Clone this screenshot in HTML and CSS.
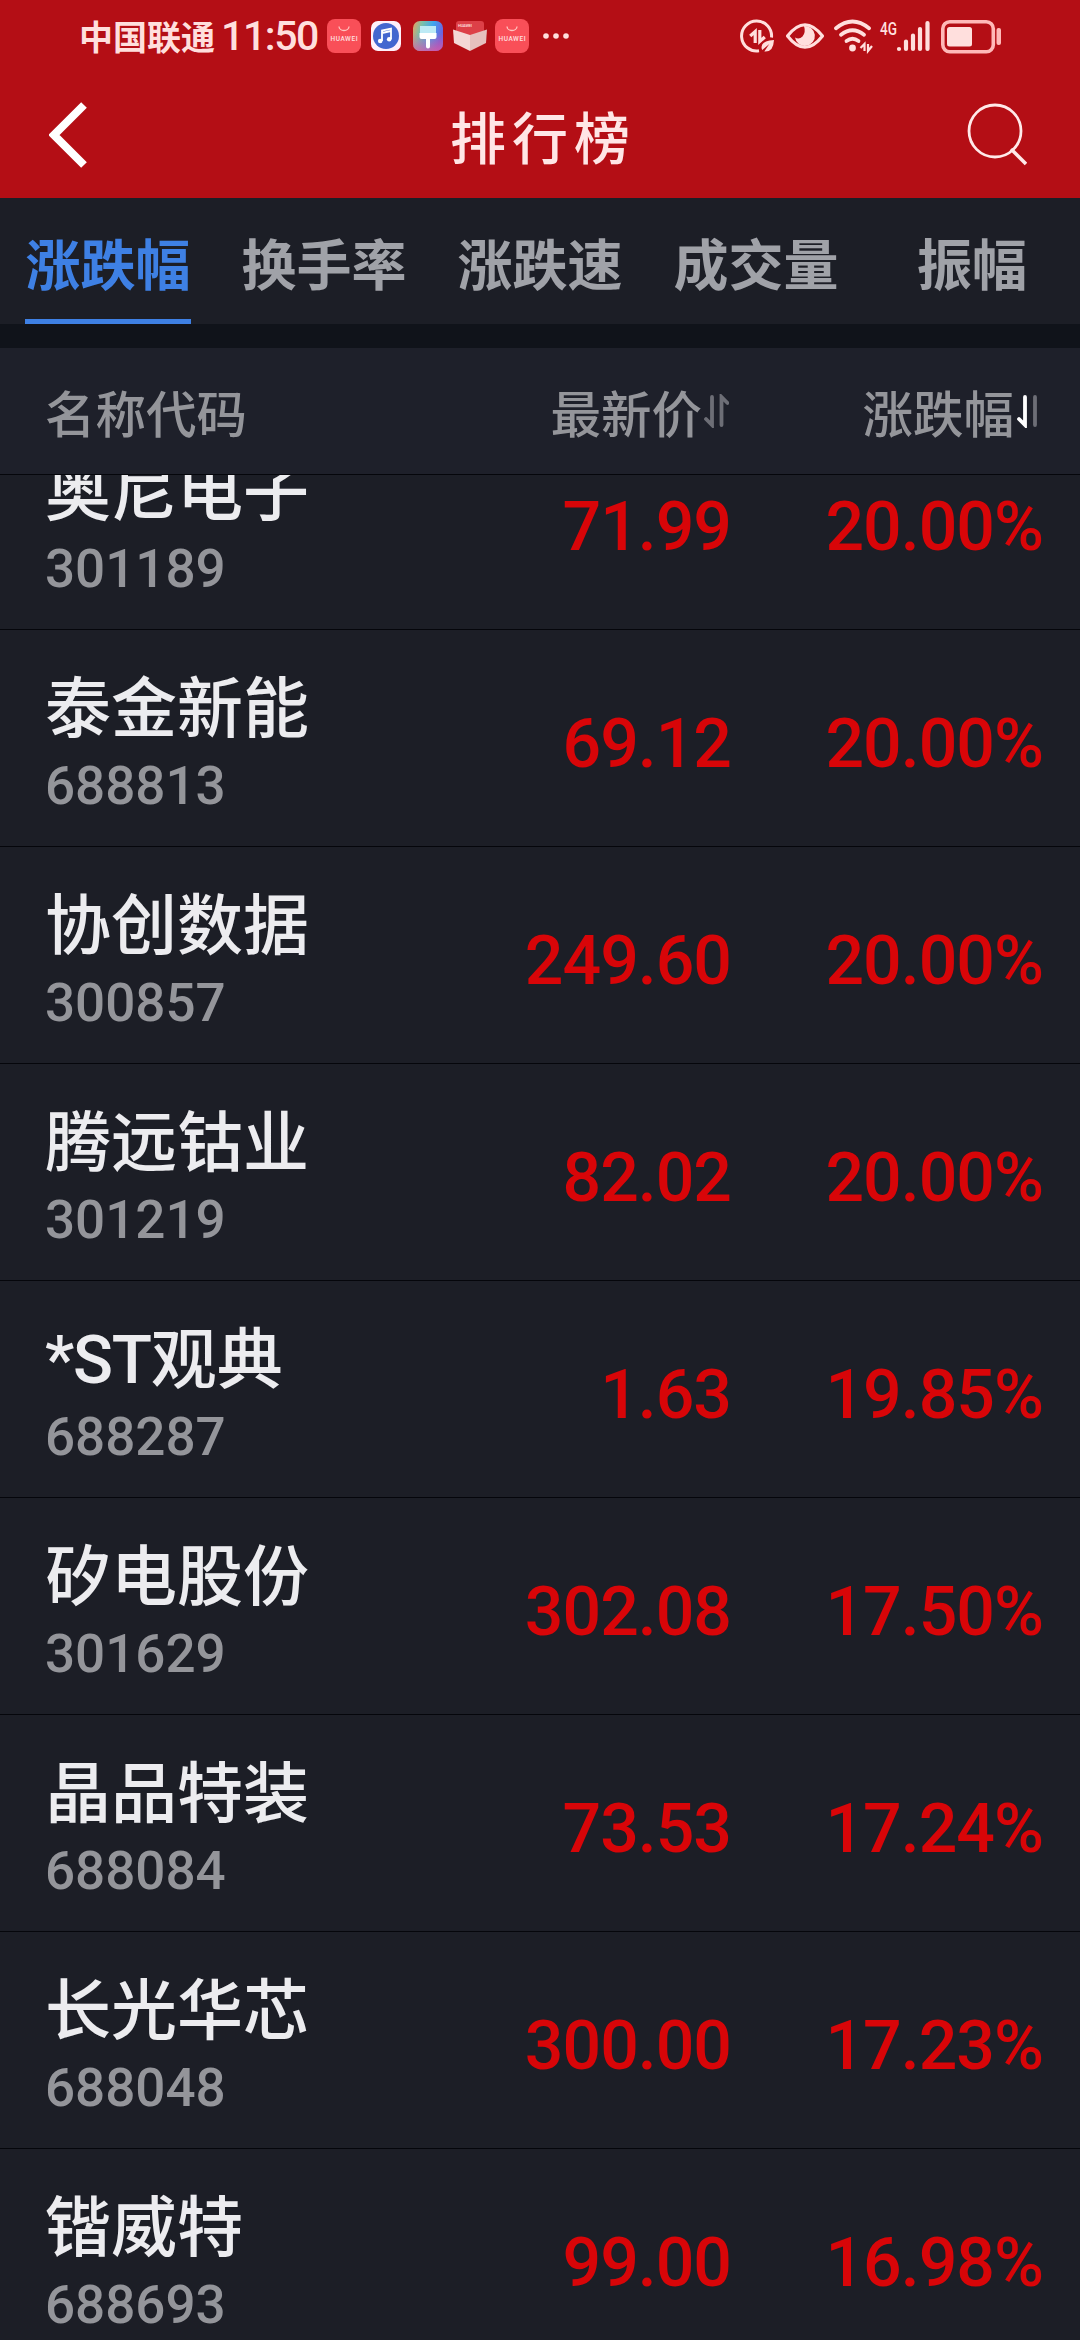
FILE: index.html
```html
<!DOCTYPE html>
<html lang="zh-CN">
<head>
  <meta charset="UTF-8">
  <meta name="viewport" content="width=device-width, initial-scale=1.0">
  <title>排行榜</title>
  <link rel="stylesheet" href="styles.css">
</head>
<body>
  <header class="top">
    <div class="status-bar">
      <span class="carrier">中国联通</span>
      <span class="clock">11:50</span>
      <div class="apps">
        <svg class="app-lg" viewBox="0 0 34 34">
          <rect width="34" height="34" rx="8" fill="#f94f58"/>
          <path d="M12 7.500a5 4 0 0 0 10 0" fill="none" stroke="#ffc5c0" stroke-width="1.300"/>
          <text class="brand" x="17" y="22" textLength="27">HUAWEI</text>
        </svg>
        <svg class="app-sm" viewBox="0 0 30 30">
          <rect width="30" height="30" rx="7" fill="#fff0fa"/>
          <circle cx="15" cy="15" r="13" fill="#4367cf"/>
          <path d="M11 20V9.500l9-2V18M11 12l9-2" fill="none" stroke="#fff" stroke-width="1.800"/>
          <circle cx="9.200" cy="20" r="2.300" fill="#fff"/>
          <circle cx="18.200" cy="18.300" r="2.300" fill="#fff"/>
        </svg>
        <svg class="app-sm app-theme" viewBox="0 0 30 30">
          <defs>
            <linearGradient id="theme" x1="0" y1="0" x2="1" y2="0.300">
              <stop offset="0" stop-color="#f0a05c"/>
              <stop offset="0.300" stop-color="#7cc0a8"/>
              <stop offset="0.650" stop-color="#3fa5ee"/>
              <stop offset="1" stop-color="#6c62e0"/>
            </linearGradient>
            <linearGradient id="warm" x1="0" y1="0" x2="0" y2="1">
              <stop offset="0.400" stop-color="#e8589c" stop-opacity="0"/>
              <stop offset="1" stop-color="#e8589c" stop-opacity="0.750"/>
            </linearGradient>
          </defs>
          <rect width="30" height="30" rx="7" fill="url(#theme)"/>
          <rect width="30" height="30" rx="7" fill="url(#warm)"/>
          <path d="M7 5h16v7H7z" fill="#bdeaf5"/>
          <path d="M6.500 12h17v4q0 2-2 2h-4.500v7.500a2 2 0 0 1-4 0V18H8.500q-2 0-2-2z" fill="#fff"/>
        </svg>
        <svg class="app-lg" viewBox="0 0 34 34">
          <path d="M3 5q0-3 3-3h22q3 0 3 3v11H3z" fill="#dd4048"/>
          <path d="M0 10.500L17 16v16L1 24z" fill="#f4d8d6"/>
          <path d="M34 10.500L17 16v16l16-8z" fill="#e6c0be"/>
          <text class="brand brand-sm" x="12" y="8" textLength="14">HUAWEI</text>
        </svg>
        <svg class="app-lg app-store" viewBox="0 0 34 34">
          <rect width="34" height="34" rx="8" fill="#f94f58"/>
          <path d="M12 7.500a5 4 0 0 0 10 0" fill="none" stroke="#ffc5c0" stroke-width="1.300"/>
          <text class="brand" x="17" y="22" textLength="27">HUAWEI</text>
        </svg>
        <svg class="more" viewBox="0 0 26 6">
          <circle cx="3" cy="3" r="2.800"/>
          <circle cx="13" cy="3" r="2.800"/>
          <circle cx="23" cy="3" r="2.800"/>
        </svg>
      </div>
      <svg class="signals" viewBox="0 0 262 36">
        <!-- data saver -->
        <path d="M32.500 19.500A15 15 0 1 0 20 32.800" fill="none" stroke="#ffdfdd" stroke-width="3"/>
        <path d="M16.200 25V13.500l-5 4.500M20.800 12v11.500l5-4.500" fill="none" stroke="#ffdfdd" stroke-width="3.200"/>
        <path d="M35 22q-12 .5-12.500 7 0 2 .8 3l7-6-5 7.500q9 1 9.700-11.500z" fill="#ffdfdd"/>
        <!-- eye -->
        <path d="M48.500 18Q66 -4.500 83.500 18 66 40.500 48.500 18z" fill="none" stroke="#ffdfdd" stroke-width="3.200" stroke-linejoin="round"/>
        <path d="M65 8a10 10 0 1 1-9 11.500q4 2.500 7.500-1 3.500-4 1.500-10.500z" fill="#ffdfdd"/>
        <!-- wifi -->
        <g fill="none" stroke="#ffdfdd" stroke-width="3.800" stroke-linecap="round">
          <path d="M97 10.200q16.500-13.500 33 0"/>
          <path d="M102 16.800q11.500-9.200 23 0"/>
          <path d="M107.500 23q6-4.500 12 0"/>
        </g>
        <circle cx="113.500" cy="30" r="3.400" fill="#ffdfdd"/>
        <path d="M125.500 33v-7l-4 4M129 26v7l4-5" fill="none" stroke="#ffdfdd" stroke-width="2.200"/>
        <!-- mobile signal -->
        <text class="net" x="141" y="17" textLength="17" lengthAdjust="spacingAndGlyphs">4G</text>
        <path d="M160 31v0M167 31v-7.500M174 31V17.500M181 31V11M188.500 31V5" stroke="#ffdfdd" stroke-width="4.200" stroke-linecap="round"/>
        <!-- battery -->
        <rect x="203.800" y="3.800" width="50.500" height="30" rx="7" fill="none" stroke="#ffb9b8" stroke-width="3.600"/>
        <rect x="208" y="9" width="25" height="19.500" rx="2.500" fill="#ffdfdd"/>
        <rect x="257.500" y="10" width="4.500" height="17" rx="2" fill="#ffb9b8"/>
      </svg>
    </div>
    <div class="title-bar">
      <svg class="back" viewBox="0 0 38 66">
        <path d="M35 3L5 33l30 30" fill="none" stroke="#fff" stroke-width="8"/>
      </svg>
      <h1>排行榜</h1>
      <svg class="search" viewBox="0 0 60 64">
        <circle cx="28" cy="28" r="26" fill="none" stroke="#ffe9e9" stroke-width="2.800"/>
        <path d="M44 46l15 15" stroke="#ffe9e9" stroke-width="3.600"/>
      </svg>
    </div>
  </header>

  <nav class="tabs">
    <div class="tab active"><span>涨跌幅</span></div>
    <div class="tab"><span>换手率</span></div>
    <div class="tab"><span>涨跌速</span></div>
    <div class="tab"><span>成交量</span></div>
    <div class="tab"><span>振幅</span></div>
  </nav>

  <div class="list-head">
    <span class="col-name">名称代码</span>
    <span class="col-price">最新价<svg class="sort" viewBox="0 0 26 34">
      <path class="off" d="M9 3v28l-6-6"/>
      <path class="off" d="M18.500 31V3l6 6"/>
    </svg></span>
    <span class="col-rate">涨跌幅<svg class="sort" viewBox="0 0 26 34">
      <path class="on" d="M10 3v28l-6-6"/>
      <path class="off" d="M20 3v28"/>
    </svg></span>
  </div>

  <main class="list">
    <div class="row">
      <div class="stock"><div class="name">奥尼电子</div><div class="code">301189</div></div>
      <div class="price">71.99</div>
      <div class="rate">20.00%</div>
    </div>
    <div class="row">
      <div class="stock"><div class="name">泰金新能</div><div class="code">688813</div></div>
      <div class="price">69.12</div>
      <div class="rate">20.00%</div>
    </div>
    <div class="row">
      <div class="stock"><div class="name">协创数据</div><div class="code">300857</div></div>
      <div class="price">249.60</div>
      <div class="rate">20.00%</div>
    </div>
    <div class="row">
      <div class="stock"><div class="name">腾远钴业</div><div class="code">301219</div></div>
      <div class="price">82.02</div>
      <div class="rate">20.00%</div>
    </div>
    <div class="row">
      <div class="stock"><div class="name"><span class="latin">*ST</span>观典</div><div class="code">688287</div></div>
      <div class="price">1.63</div>
      <div class="rate">19.85%</div>
    </div>
    <div class="row">
      <div class="stock"><div class="name">矽电股份</div><div class="code">301629</div></div>
      <div class="price">302.08</div>
      <div class="rate">17.50%</div>
    </div>
    <div class="row">
      <div class="stock"><div class="name">晶品特装</div><div class="code">688084</div></div>
      <div class="price">73.53</div>
      <div class="rate">17.24%</div>
    </div>
    <div class="row">
      <div class="stock"><div class="name">长光华芯</div><div class="code">688048</div></div>
      <div class="price">300.00</div>
      <div class="rate">17.23%</div>
    </div>
    <div class="row">
      <div class="stock"><div class="name">锴威特</div><div class="code">688693</div></div>
      <div class="price">99.00</div>
      <div class="rate">16.98%</div>
    </div>
  </main>
</body>
</html>
```

FILE: styles.css
```css
* {
  box-sizing: border-box;
}

body {
  margin: 0;
  height: 2340px;
  display: flex;
  flex-direction: column;
  overflow: hidden;
  background-color: #1c1e26;
  color: #ececef;
  font-family: "Noto Sans CJK SC", sans-serif;
}

svg {
  display: block;
  flex: none;
}

.top {
  height: 198px;
  flex: none;
  background-color: #b40e15;
}

/* status bar */
.status-bar {
  display: flex;
  align-items: center;
  height: 72px;
  padding: 0 79px 0 79px;
  color: #ffdfdd;
}

.carrier {
  font-size: 34px;
  font-weight: 700;
  line-height: 74px;
}

.clock {
  width: 98px;
  margin-left: 6px;
  font-family: Roboto, sans-serif;
  font-size: 41px;
  font-weight: 500;
  line-height: 78px;
  letter-spacing: -1.4px;
}

.apps {
  display: flex;
  align-items: center;
  gap: 10px;
  margin-left: 8px;
}

.app-lg {
  width: 34px;
  height: 34px;
}

.app-sm {
  width: 30px;
  height: 30px;
}

.app-theme {
  margin-left: 2px;
}

.app-store {
  margin-left: -2px;
}

.more {
  width: 26px;
  height: 6px;
  margin-left: 4px;
  fill: #ffdfdd;
}

.brand {
  font: 500 6.5px Roboto, sans-serif;
  fill: #ffe0e0;
  text-anchor: middle;
}

.brand-sm {
  font-size: 4px;
}

.signals {
  width: 262px;
  height: 36px;
  margin-left: auto;
}

.net {
  font: 500 19px Roboto, sans-serif;
  fill: #ffdfdd;
}

/* title */
.title-bar {
  display: flex;
  align-items: center;
  justify-content: space-between;
  height: 126px;
  padding: 0 53px 0 49px;
}

.back {
  width: 38px;
  height: 66px;
}

.title-bar h1 {
  margin: 0 0 0 32px;
  font-size: 56px;
  font-weight: 500;
  line-height: 124px;
  letter-spacing: 6px;
  color: #ffe6e6;
}

.search {
  width: 60px;
  height: 64px;
}

/* tabs */
.tabs {
  display: grid;
  grid-template-columns: repeat(5, 1fr);
  flex: none;
  height: 150px;
  border-bottom: 24px solid #10131a;
}

.tab {
  display: flex;
  justify-content: center;
  font-size: 55px;
  font-weight: 700;
  line-height: 126px;
  color: #a0a2a8;
}

.tab span {
  height: 126px;
}

.tab.active span {
  color: #3e80e4;
  border-bottom: 5px solid #3e80e4;
}

/* list header */
.list-head,
.row {
  display: grid;
  grid-template-columns: 400px 1fr 312px;
  align-items: center;
  padding: 0 37px 0 45px;
}

.list-head {
  flex: none;
  height: 127px;
  padding-right: 39px;
  background-color: #1e202a;
  border-bottom: 1px solid #05060b;
  font-size: 50.5px;
  font-weight: 500;
  line-height: 126px;
  color: #94959a;
}

.col-price,
.col-rate {
  display: flex;
  align-items: center;
  justify-content: flex-end;
}

.sort {
  width: 26px;
  height: 34px;
  margin-left: 1px;
  fill: none;
  stroke-width: 3.8;
  stroke-linecap: round;
}

.sort .off {
  stroke: #6d6e76;
}

.sort .on {
  stroke: #fff;
}

/* rows */
.list {
  flex: 1;
  display: flex;
  flex-direction: column;
  justify-content: flex-start;
  min-height: 0;
  overflow: hidden;
}

.row {
  flex: none;
  height: 217px;
  border-bottom: 1px solid #05060b;
}

/* list is scrolled part way through the first row */
.row:first-child {
  margin-top: -62px;
}

.name {
  height: 84px;
  font-size: 66px;
  font-weight: 500;
  line-height: 84px;
}

.latin {
  font-family: Roboto, sans-serif;
  line-height: 1;
  letter-spacing: -1.2px;
}

.code {
  padding-top: 6px;
  margin-bottom: -6px;
  font-family: Roboto, sans-serif;
  font-size: 53px;
  font-weight: 500;
  line-height: 70px;
  color: #94959a;
}

.price,
.rate {
  padding-top: 11px;
  font-family: Roboto, sans-serif;
  font-size: 68px;
  font-weight: 500;
  letter-spacing: -1px;
  text-align: right;
  color: #d80508;
}
```
